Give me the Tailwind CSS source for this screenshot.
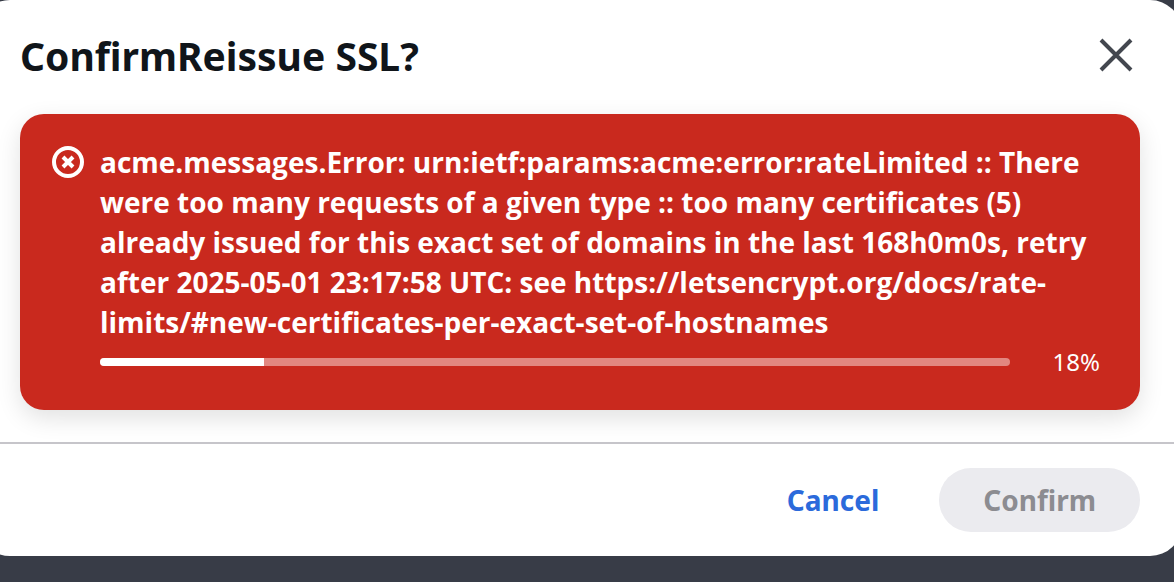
<!DOCTYPE html>
<html lang="en">
  <head>
    <meta charset="UTF-8" />
    <meta name="viewport" content="width=device-width, initial-scale=1.0" />
    <title>Reissue SSL</title>
    <script src="https://cdn.jsdelivr.net/npm/@tailwindcss/browser@4"></script>
  </head>
  <body
    class="bg-[#383c47] min-h-screen overflow-hidden font-['Noto_Sans',sans-serif]"
  >
    <!-- Dialog is slightly wider than the viewport -->
    <div
      role="dialog"
      aria-labelledby="dialogTitle"
      class="-ml-[22px] -mr-2 bg-white rounded-[32px]"
    >
      <header class="flex items-center justify-between pl-[42px] pr-8 pt-[22px]">
        <h1 id="dialogTitle" class="text-[39px] leading-16 font-bold text-[#10151a]">
          ConfirmReissue SSL?
        </h1>
        <button type="button" aria-label="Close" class="p-4 text-[#43474f]">
          <svg class="size-9" viewBox="0 0 36 36" fill="none" stroke="currentColor" stroke-width="4">
            <path d="M3 2l30 30M33 2L3 32" />
          </svg>
        </button>
      </header>

      <div class="px-[42px] pt-6 pb-8">
        <div
          role="alert"
          class="flex gap-4 rounded-3xl bg-[#c9291e] text-white p-8 pr-10 shadow-[0_8px_24px_rgba(0,0,0,0.12)]"
        >
          <svg class="size-8 shrink-0" viewBox="0 0 32 32" fill="none" stroke="currentColor">
            <circle cx="16" cy="16" r="14" stroke-width="4" />
            <path d="M11 11l10 10M21 11L11 21" stroke-width="4" />
          </svg>
          <div class="flex-1 min-w-0 -mt-1">
            <p class="mb-1 font-['Open_Sans',sans-serif] text-[28px] leading-10 font-bold">
              acme.messages.Error: urn:ietf:params:acme:error:rateLimited :: There were too many requests of a given type :: too many certificates (5) already issued for this exact set of domains in the last 168h0m0s, retry after 2025-05-01 23:17:58 UTC: see https://letsencrypt.org/docs/rate-limits/#new-certificates-per-exact-set-of-hostnames
            </p>
            <div class="flex items-center">
              <div
                role="progressbar"
                aria-label="Progress"
                aria-valuenow="18"
                aria-valuemin="0"
                aria-valuemax="100"
                class="flex-1 h-2 rounded-full bg-[#e28780] overflow-hidden"
              >
                <div class="h-full bg-white" style="width: 18%"></div>
              </div>
              <span class="w-[90px] text-right text-2xl">18%</span>
            </div>
          </div>
        </div>
      </div>

      <footer
        class="flex items-center justify-end gap-4 border-t-2 border-[#c6c5ca] py-6 pr-[42px] text-[28px] font-bold"
      >
        <button type="button" class="h-16 px-11 rounded-full text-[#2b6adb]">Cancel</button>
        <button type="button" disabled class="h-16 px-11 rounded-full bg-[#ebebef] text-[#8c8c91]">
          Confirm
        </button>
      </footer>
    </div>
  </body>
</html>
